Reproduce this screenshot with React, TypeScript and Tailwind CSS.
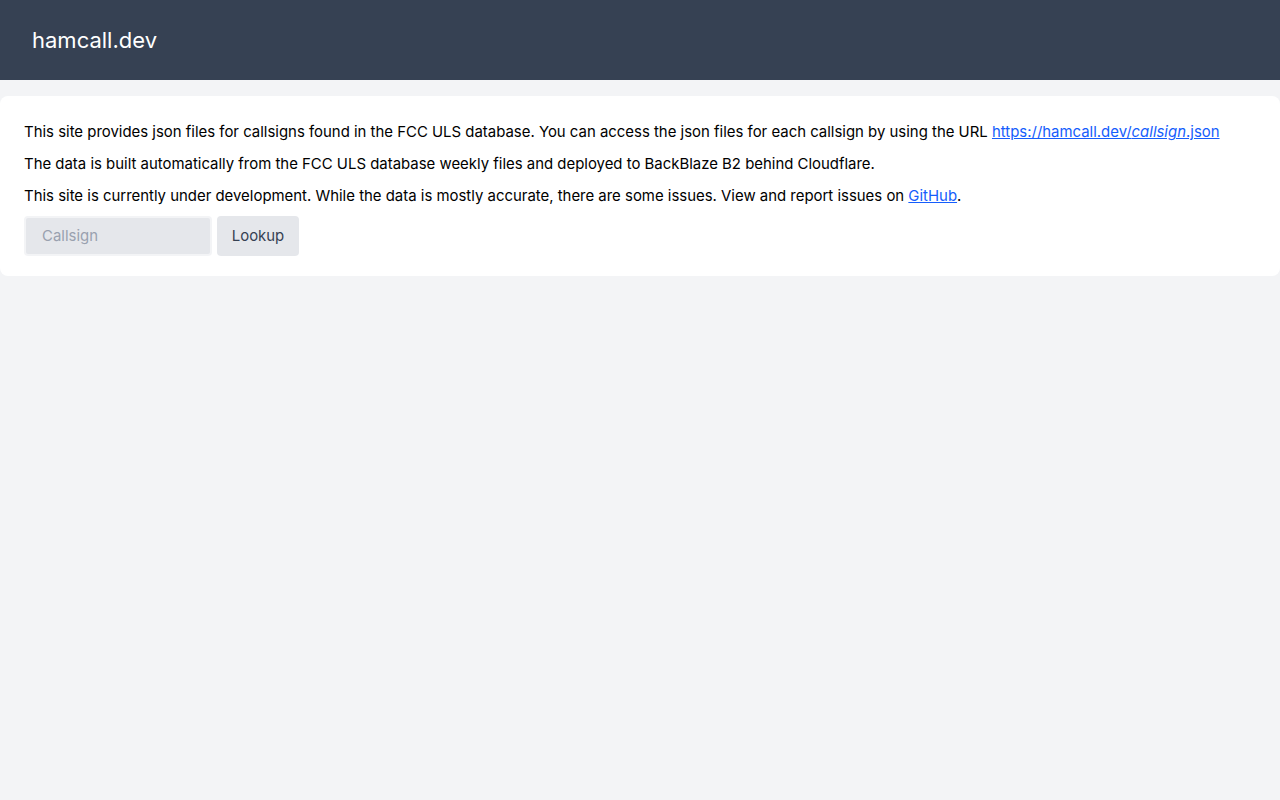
import React from 'react';

export default function App() {
  return (
    <div className="min-h-screen bg-gray-100 font-['Inter',sans-serif] text-black">
      <header className="flex h-20 items-center bg-gray-700 px-8">
        <h1 className="text-[22px] font-normal text-white">hamcall.dev</h1>
      </header>

      <main className="pt-4">
        <div className="rounded-lg bg-white px-6 pt-6 pb-5 text-[14.93px] leading-6">
          <p className="mb-2">
            This site provides json files for callsigns found in the FCC ULS database. You can access the json
            files for each callsign by using the URL{' '}
            <a href="#" className="text-blue-600 underline">
              https://hamcall.dev/<i>callsign</i>.json
            </a>
          </p>
          <p className="mb-2">
            The data is built automatically from the FCC ULS database weekly files and deployed to BackBlaze B2
            behind Cloudflare.
          </p>
          <p className="mb-2">
            This site is currently under development. While the data is mostly accurate, there are some issues.
            View and report issues on{' '}
            <a href="#" className="text-blue-600 underline">
              GitHub
            </a>
            .
          </p>
          <form className="flex gap-[5px]" onSubmit={(e) => e.preventDefault()}>
            <input
              type="text"
              placeholder="Callsign"
              className="h-10 w-[188px] rounded border-2 border-gray-100 bg-gray-200 px-4 text-[14.93px] placeholder:text-gray-400 focus:outline-none"
            />
            <button type="submit" className="h-10 w-[82px] rounded bg-gray-200 text-[14.93px] text-gray-700">
              Lookup
            </button>
          </form>
        </div>
      </main>
    </div>
  );
}
